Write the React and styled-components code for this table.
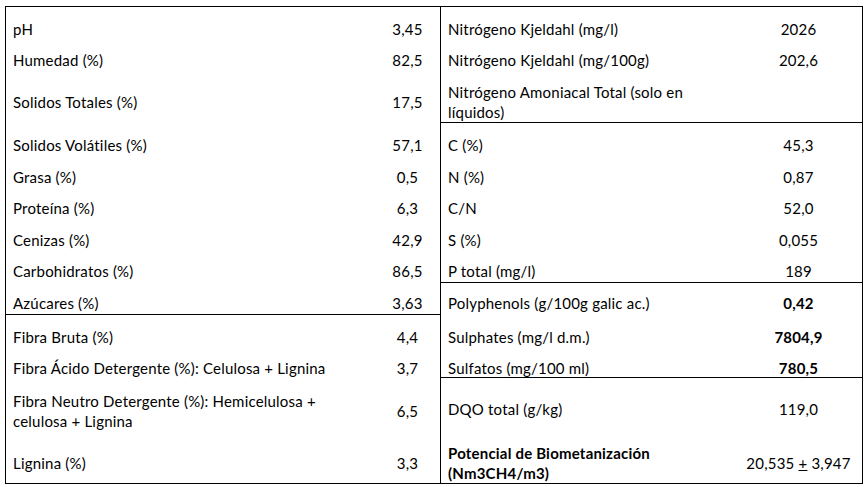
import React from 'react';
import styled, { createGlobalStyle } from 'styled-components';

const GlobalStyle = createGlobalStyle`
  html, body {
    margin: 0;
    padding: 0;
    background: #ffffff;
  }
  body {
    font-family: Lato, "Open Sans", "Liberation Sans", sans-serif;
    color: #000000;
  }
`;

const leftSections = [
  [
    { label: 'pH', value: '3,45', h: 31 },
    { label: 'Humedad (%)', value: '82,5', h: 42 },
    { label: 'Solidos Totales (%)', value: '17,5', h: 43 },
    { label: 'Solidos Volátiles (%)', value: '57,1', h: 32 },
    { label: 'Grasa (%)', value: '0,5', h: 31 },
    { label: 'Proteína (%)', value: '6,3', h: 32 },
    { label: 'Cenizas (%)', value: '42,9', h: 31 },
    { label: 'Carbohidratos (%)', value: '86,5', h: 32 },
    { label: 'Azúcares (%)', value: '3,63', h: 33 },
  ],
  [
    { label: 'Fibra Bruta (%)', value: '4,4', h: 31 },
    { label: 'Fibra Ácido Detergente (%): Celulosa + Lignina', value: '3,7', h: 33 },
    { label: 'Fibra Neutro Detergente (%): Hemicelulosa +\ncelulosa + Lignina', value: '6,5', h: 62 },
    { label: 'Lignina (%)', value: '3,3', h: 42 },
  ],
];

const rightSections = [
  [
    { label: 'Nitrógeno Kjeldahl (mg/l)', value: '2026', h: 31 },
    { label: 'Nitrógeno Kjeldahl (mg/100g)', value: '202,6', h: 32 },
    { label: 'Nitrógeno Amoniacal Total (solo en\nlíquidos)', value: '', h: 52 },
  ],
  [
    { label: 'C (%)', value: '45,3', h: 32 },
    { label: 'N (%)', value: '0,87', h: 31 },
    { label: 'C/N', value: '52,0', h: 32 },
    { label: 'S (%)', value: '0,055', h: 31 },
    { label: 'P total (mg/l)', value: '189', h: 33 },
  ],
  [
    { label: 'Polyphenols (g/100g galic ac.)', value: '0,42', h: 32, pt: 10, boldValue: true },
    { label: 'Sulphates (mg/l d.m.)', value: '7804,9', h: 31, boldValue: true },
    { label: 'Sulfatos (mg/100 ml)', value: '780,5', h: 31, boldValue: true },
  ],
  [
    { label: 'DQO total (g/kg)', value: '119,0', h: 53, pt: 21 },
    {
      label: 'Potencial de Biometanización\n(Nm3CH4/m3)',
      value: (
        <>
          20,535 <u>+</u> 3,947
        </>
      ),
      h: 52,
      boldLabel: true,
    },
  ],
];

const Page = styled.div`
  padding: 6px 0 0 5px;
`;

const Sheet = styled.div`
  display: flex;
  width: 858px;
  border: 1px solid #000;
  box-sizing: border-box;
`;

const Panel = styled.div`
  display: flex;
  flex-direction: column;
  width: ${(p) => p.$w}px;
  border-right: ${(p) => (p.$divider ? '1px solid #000' : 'none')};
  box-sizing: border-box;
`;

const Section = styled.div`
  border-bottom: ${(p) => (p.$last ? 'none' : '1px solid #000')};
`;

const Row = styled.div`
  display: grid;
  grid-template-columns: 1fr ${(p) => p.$valueW}px;
  align-items: center;
  align-content: start;
  height: ${(p) => p.$h}px;
  padding-top: ${(p) => p.$pt}px;
  box-sizing: border-box;
  font-size: 15px;
  letter-spacing: 0.2px;
  line-height: 20px;
`;

const Label = styled.div`
  padding: 0 7px;
  white-space: pre-line;
  font-weight: ${(p) => (p.$bold ? 700 : 400)};
`;

const Value = styled.div`
  text-align: center;
  white-space: nowrap;
  font-weight: ${(p) => (p.$bold ? 700 : 400)};
`;

const Table = ({ sections, width, valueW, divider }) => (
  <Panel $w={width} $divider={divider}>
    {sections.map((rows, si) => (
      <Section key={si} $last={si === sections.length - 1}>
        {rows.map((r, ri) => (
          <Row key={ri} $h={r.h} $pt={r.pt ?? 12} $valueW={valueW}>
            <Label $bold={r.boldLabel}>{r.label}</Label>
            <Value $bold={r.boldValue}>{r.value}</Value>
          </Row>
        ))}
      </Section>
    ))}
  </Panel>
);

export default function App() {
  return (
    <>
      <GlobalStyle />
      <Page>
        <Sheet>
          <Table sections={leftSections} width={435} valueW={65} divider />
          <Table sections={rightSections} width={421} valueW={127} />
        </Sheet>
      </Page>
    </>
  );
}
